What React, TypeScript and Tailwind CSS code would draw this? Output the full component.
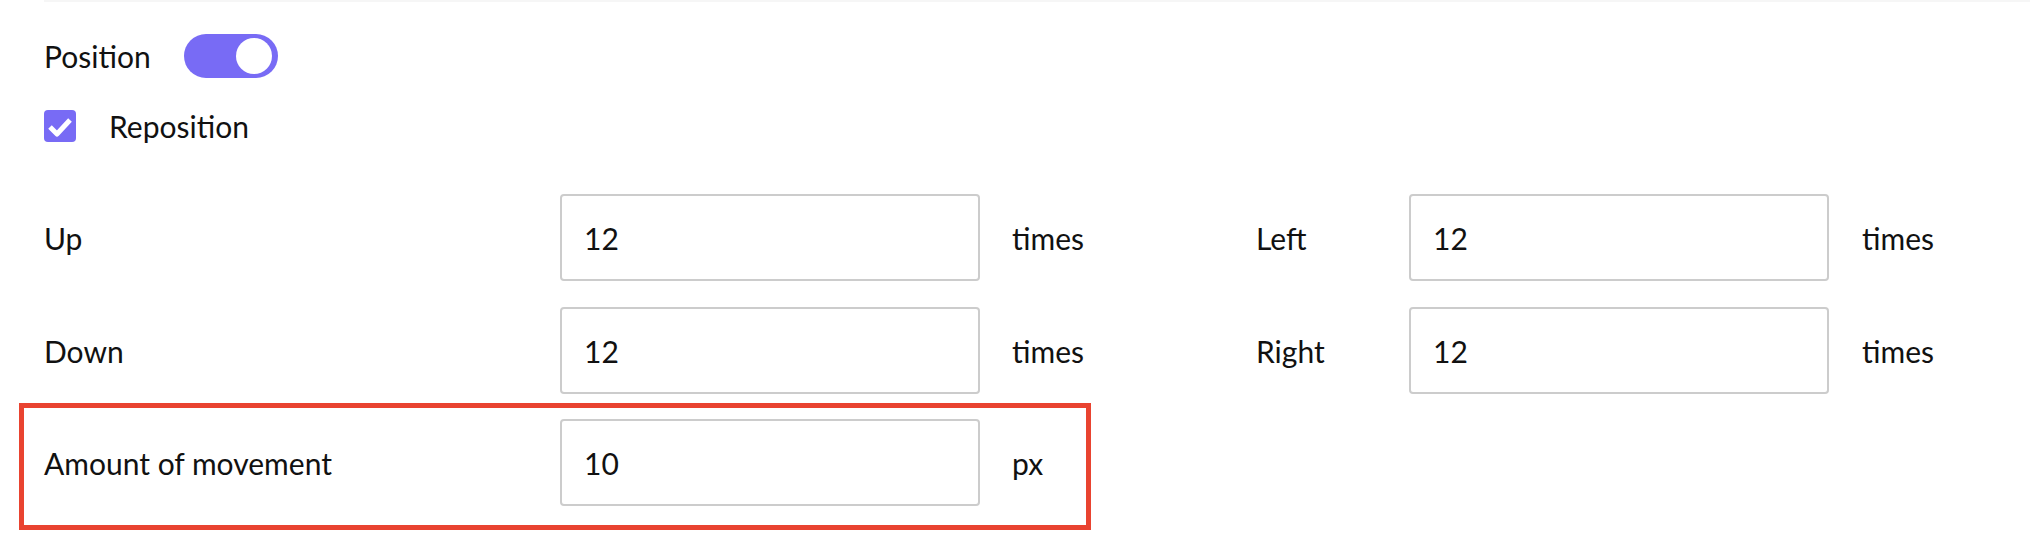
import React, { useState } from 'react';

const Field: React.FC<{ label: string; value: string; unit: string; labelWidth: string; unitGap: string }> = ({ label, value, unit, labelWidth, unitGap }) => (
    <div className="flex items-center h-[87px]">
        <span className={`${labelWidth} flex-shrink-0`}>{label}</span>
        <input
            defaultValue={value}
            className="w-[420px] h-[87px] flex-shrink-0 border-2 border-[#cccccc] rounded-[4px] pl-[22px] bg-white text-[#111] outline-none"
        />
        <span className={unitGap}>{unit}</span>
    </div>
);

const App: React.FC = () => {
    const [enabled, setEnabled] = useState(true);
    const [checked, setChecked] = useState(true);

    return (
        <div className="w-full min-h-[550px] bg-white text-[#111] text-[30px] leading-none font-['Lato',sans-serif]">
            {/* divider from the section above */}
            <div className="ml-[44px] h-[2px] bg-[#f6f6f6]" />

            {/* POSITION TOGGLE */}
            <div className="flex items-center h-[44px] pl-[44px] mt-[32px]">
                <span className="w-[140px]">Position</span>
                <button
                    onClick={() => setEnabled(!enabled)}
                    className={`w-[94px] h-[44px] rounded-full flex items-center px-[6px] ${enabled ? 'bg-[#786bf5] justify-end' : 'bg-[#cccccc] justify-start'}`}
                >
                    <span className="w-[36px] h-[36px] rounded-full bg-white" />
                </button>
            </div>

            {/* REPOSITION CHECKBOX */}
            <div className="flex items-center h-[32px] pl-[44px] mt-[32px]">
                <button
                    onClick={() => setChecked(!checked)}
                    className={`w-[32px] h-[32px] rounded-[4px] flex items-center justify-center ${checked ? 'bg-[#786bf5]' : 'border-2 border-[#cccccc]'}`}
                >
                    {checked && (
                        <svg width="32" height="32" viewBox="0 0 32 32">
                            <polyline points="6,17 13,24 26,10" fill="none" stroke="white" strokeWidth="5" strokeLinejoin="round" />
                        </svg>
                    )}
                </button>
                <span className="ml-[33px]">Reposition</span>
            </div>

            {/* FIELDS */}
            <div className="flex items-center pl-[44px] mt-[52px]">
                <div className="w-[1212px]">
                    <Field label="Up" value="12" unit="times" labelWidth="w-[516px]" unitGap="ml-[32px]" />
                </div>
                <Field label="Left" value="12" unit="times" labelWidth="w-[153px]" unitGap="ml-[33px]" />
            </div>

            <div className="flex items-center pl-[44px] mt-[26px]">
                <div className="w-[1212px]">
                    <Field label="Down" value="12" unit="times" labelWidth="w-[516px]" unitGap="ml-[32px]" />
                </div>
                <Field label="Right" value="12" unit="times" labelWidth="w-[153px]" unitGap="ml-[33px]" />
            </div>

            {/* HIGHLIGHTED ROW */}
            <div className="ml-[19px] mt-[9px] w-[1072px] border-[5px] border-[#e94330] pl-[20px] pt-[11px] pb-[19px]">
                <Field label="Amount of movement" value="10" unit="px" labelWidth="w-[516px]" unitGap="ml-[32px]" />
            </div>
        </div>
    );
};

export default App;
